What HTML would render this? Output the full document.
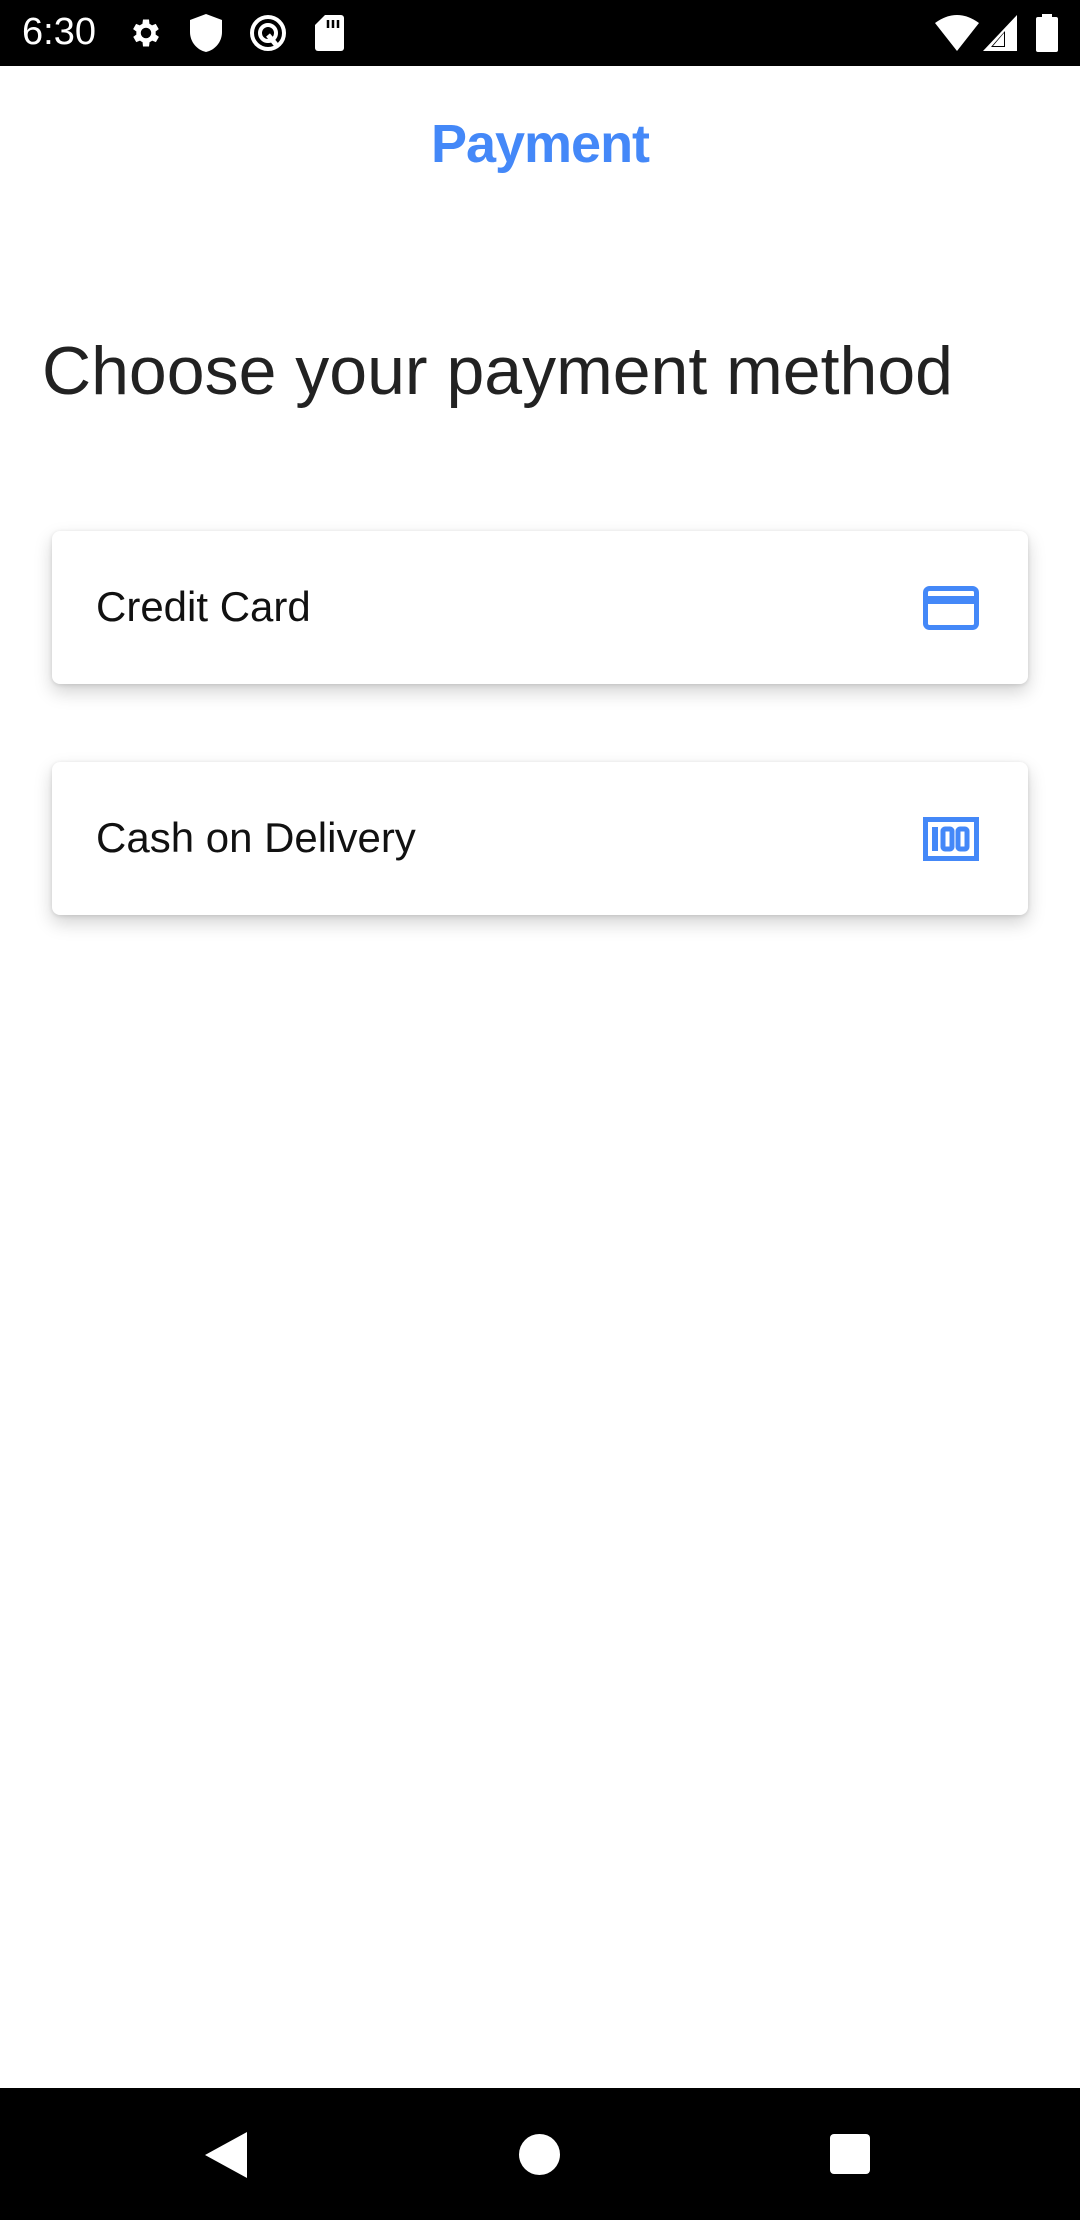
<!DOCTYPE html>
<html><head><meta charset="utf-8"><style>
html,body{margin:0;padding:0;width:1080px;height:2220px;background:#fff;overflow:hidden;font-family:"Liberation Sans",Roboto,sans-serif;position:relative}
.sb{position:absolute;left:0;top:0;width:1080px;height:66px;background:#000;color:#fff}
.time{position:absolute;left:22px;top:12px;font-size:38px;line-height:40px}
.title{position:absolute;left:0;width:1080px;top:112px;text-align:center;color:#4488f8;font-size:54px;font-weight:bold;letter-spacing:-1px;line-height:64px}
.h{position:absolute;left:42px;top:331px;font-size:68px;color:#222;line-height:80px;white-space:nowrap}
.card{position:absolute;left:52px;width:976px;height:153px;background:#fff;border-radius:8px;box-shadow:0 8px 18px rgba(0,0,0,0.18),0 1px 4px rgba(0,0,0,0.12)}
.card span{position:absolute;left:44px;top:50px;font-size:42px;line-height:52px;color:#111}
.card svg{position:absolute;left:871px;top:55px}
.nav{position:absolute;left:0;top:2088px;width:1080px;height:132px;background:#000}
</style></head><body>
<div class="sb">
<div class="time">6:30</div>
<svg style="position:absolute;left:128px;top:15px" width="36" height="36" viewBox="0 0 24 24"><path fill="#fff" d="M19.4 13a7.5 7.5 0 0 0 0-2l2.1-1.6-2-3.5-2.5 1a7 7 0 0 0-1.7-1L15 3h-4l-.4 2.9a7 7 0 0 0-1.7 1l-2.5-1-2 3.5L6.6 11a7.5 7.5 0 0 0 0 2l-2.1 1.6 2 3.5 2.5-1a7 7 0 0 0 1.7 1L11 21h4l.4-2.9a7 7 0 0 0 1.7-1l2.5 1 2-3.5zM13 15.5A3.5 3.5 0 1 1 13 8.5a3.5 3.5 0 0 1 0 7z" transform="translate(-1 0)"/></svg>
<svg style="position:absolute;left:190px;top:14px" width="32" height="38" viewBox="0 0 16 19"><path fill="#fff" d="M8 0L0 3v6c0 5 3.5 9 8 10 4.5-1 8-5 8-10V3z"/></svg>
<svg style="position:absolute;left:248px;top:13px" width="40" height="40" viewBox="0 0 40 40"><circle cx="20" cy="20" r="16" fill="none" stroke="#fff" stroke-width="4"/><circle cx="20" cy="20" r="8" fill="none" stroke="#fff" stroke-width="4"/><path d="M20 22l10 12" stroke="#fff" stroke-width="5"/></svg>
<svg style="position:absolute;left:315px;top:15px" width="29" height="36" viewBox="0 0 29 36"><path fill="#fff" d="M10 0h16a3 3 0 0 1 3 3v30a3 3 0 0 1-3 3H3a3 3 0 0 1-3-3V10z"/><path d="M13 5v8M18 5v8M23 5v8" stroke="#000" stroke-width="2.5"/></svg>
<svg style="position:absolute;left:935px;top:15px" width="44" height="36" viewBox="0 0 44 36"><path fill="#fff" d="M0 8Q22-8 44 8L22 36z"/></svg>
<svg style="position:absolute;left:983px;top:15px" width="34" height="36" viewBox="0 0 34 36"><path fill="#fff" d="M34 0V36H0z"/><path fill="#000" d="M22 16V32H8z"/><path fill="#fff" d="M21 18V31H10z"/></svg>
<svg style="position:absolute;left:1036px;top:14px" width="22" height="38" viewBox="0 0 22 38"><rect x="6" y="0" width="10" height="4" fill="#fff"/><rect x="0" y="3" width="22" height="35" rx="2" fill="#fff"/></svg>
</div>
<div class="title">Payment</div>
<div class="h">Choose your payment method</div>
<div class="card" style="top:531px"><span>Credit Card</span>
<svg width="56" height="44" viewBox="0 0 56 44"><rect x="2.5" y="2.5" width="51" height="39" rx="4" fill="none" stroke="#4488f8" stroke-width="5"/><rect x="2" y="10" width="52" height="8" fill="#4488f8"/></svg></div>
<div class="card" style="top:762px"><span>Cash on Delivery</span>
<svg width="56" height="44" viewBox="0 0 56 44"><rect x="2.5" y="2.5" width="51" height="39" fill="none" stroke="#4488f8" stroke-width="5"/><rect x="9" y="10" width="6" height="24" fill="#4488f8"/><rect x="20" y="12" width="9" height="20" rx="2" fill="none" stroke="#4488f8" stroke-width="5"/><rect x="35" y="12" width="9" height="20" rx="2" fill="none" stroke="#4488f8" stroke-width="5"/></svg></div>
<div class="nav">
<svg style="position:absolute;left:205px;top:44px" width="42" height="46" viewBox="0 0 42 46"><path fill="#fff" d="M42 0V46L0 23z"/></svg>
<div style="position:absolute;left:519px;top:46px;width:41px;height:41px;border-radius:50%;background:#fff"></div>
<div style="position:absolute;left:830px;top:46px;width:40px;height:40px;border-radius:4px;background:#fff"></div>
</div>
</body></html>
